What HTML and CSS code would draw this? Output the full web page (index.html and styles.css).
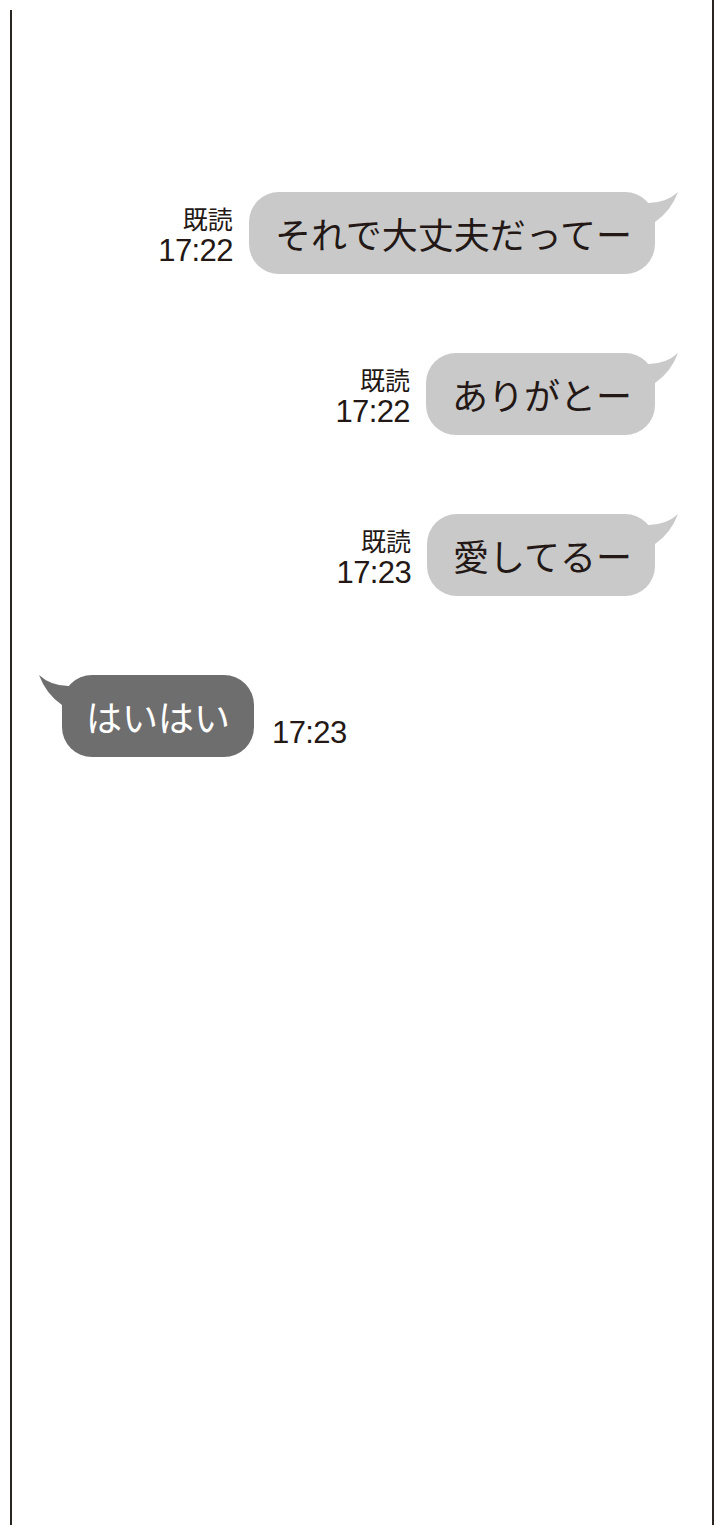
FILE: index.html
```html
<!DOCTYPE html>
<html lang="ja">
<head>
<meta charset="utf-8">
<title>chat</title>
<link rel="stylesheet" href="styles.css">
</head>
<body>
<div class="page">
  <div class="rule rule-left"></div>
  <main class="chat">
    <div class="row row-out">
      <div class="meta"><span class="read">既読</span><span class="time">17:22</span></div>
      <div class="bubble bubble-out">それで大丈夫だってー<svg class="tail tail-out" viewBox="0 0 45 35" width="45" height="35"><path d="M3,11 Q28,15 43,1 Q36,20 20,31 L3,31 Z"/></svg></div>
    </div>
    <div class="row row-out">
      <div class="meta"><span class="read">既読</span><span class="time">17:22</span></div>
      <div class="bubble bubble-out">ありがとー<svg class="tail tail-out" viewBox="0 0 45 35" width="45" height="35"><path d="M3,11 Q28,15 43,1 Q36,20 20,31 L3,31 Z"/></svg></div>
    </div>
    <div class="row row-out">
      <div class="meta"><span class="read">既読</span><span class="time">17:23</span></div>
      <div class="bubble bubble-out">愛してるー<svg class="tail tail-out" viewBox="0 0 45 35" width="45" height="35"><path d="M3,11 Q28,15 43,1 Q36,20 20,31 L3,31 Z"/></svg></div>
    </div>
    <div class="row row-in">
      <div class="bubble bubble-in">はいはい<svg class="tail tail-in" viewBox="0 0 45 35" width="45" height="35"><path d="M3,11 Q28,15 43,1 Q36,20 20,31 L3,31 Z"/></svg></div>
      <div class="meta-in"><span class="time">17:23</span></div>
    </div>
  </main>
  <div class="rule rule-right"></div>
</div>
</body>
</html>
```
FILE: styles.css
```css
html, body {
  margin: 0;
  padding: 0;
  background: #ffffff;
}
body {
  font-family: "Liberation Sans", "Noto Sans CJK JP", sans-serif;
  color: #231815;
}
.page {
  display: flex;
  width: 724px;
  height: 1536px;
}
.rule {
  width: 2px;
  background: #2b2522;
  flex: none;
}
.rule-left {
  margin-left: 10px;
  margin-top: 10px;
  height: 1515px;
}
.rule-right {
  margin-right: 10px;
  height: 1525px;
}
.chat {
  flex: 1;
  display: flex;
  flex-direction: column;
  gap: 79px;
  padding-top: 192px;
}
.row {
  display: flex;
  align-items: center;
  height: 82px;
}
.row-out {
  justify-content: flex-end;
  padding-right: 57px;
}
.row-in {
  justify-content: flex-start;
  padding-left: 50px;
}
.meta {
  display: flex;
  flex-direction: column;
  align-items: flex-end;
  gap: 4px;
  margin-right: 16px;
  margin-top: 4px;
}
.read {
  font-family: "Noto Sans CJK JP", sans-serif;
  font-size: 25px;
  line-height: 27px;
}
.time {
  font-family: "Liberation Sans", "Noto Sans CJK JP", sans-serif;
  font-size: 31px;
  line-height: 30px;
  letter-spacing: -0.6px;
}
.meta-in {
  align-self: flex-end;
  margin-left: 18px;
  margin-bottom: 9px;
}
.bubble {
  position: relative;
  box-sizing: border-box;
  height: 82px;
  padding: 0 23px 0 26px;
  border-radius: 30px;
  font-family: "Noto Sans CJK JP", sans-serif;
  font-size: 36px;
  line-height: 82px;
  white-space: nowrap;
}
.bubble-out {
  background: #c9c9c9;
  color: #231815;
}
.bubble-in {
  background: #6e6e6e;
  color: #ffffff;
  padding: 0 24px 0 24px;
}
.tail {
  position: absolute;
  top: -1px;
}
.tail-out {
  right: -25px;
  fill: #c9c9c9;
}
.tail-in {
  left: -25px;
  fill: #6e6e6e;
  transform: scaleX(-1);
}
```
